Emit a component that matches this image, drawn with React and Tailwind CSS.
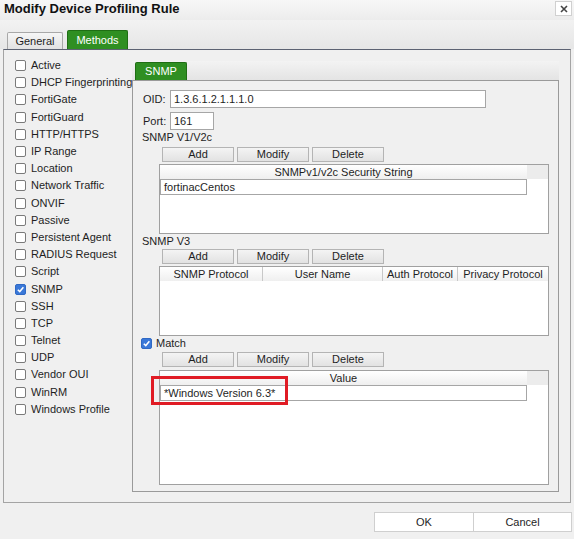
import React from "react";

const methods = [
  "Active",
  "DHCP Fingerprinting",
  "FortiGate",
  "FortiGuard",
  "HTTP/HTTPS",
  "IP Range",
  "Location",
  "Network Traffic",
  "ONVIF",
  "Passive",
  "Persistent Agent",
  "RADIUS Request",
  "Script",
  "SNMP",
  "SSH",
  "TCP",
  "Telnet",
  "UDP",
  "Vendor OUI",
  "WinRM",
  "Windows Profile",
];

function Check({ on }) {
  if (on) {
    return (
      <span className="w-[11px] h-[11px] rounded-[2px] bg-[#3a78d8] border border-[#3069c4] flex items-center justify-center shrink-0">
        <svg width="9" height="9" viewBox="0 0 10 10">
          <path d="M2 5.2 L4.2 7.3 L8.2 2.6" fill="none" stroke="#fff" strokeWidth="1.7" />
        </svg>
      </span>
    );
  }
  return <span className="w-[11px] h-[11px] rounded-[2px] bg-white border border-[#7a7a7a] shrink-0" />;
}

function Btn({ children }) {
  return (
    <div className="w-[72px] h-[15px] border border-[#b4b4b4] bg-gradient-to-b from-[#f4f4f4] to-[#e2e2e2] flex items-center justify-center leading-none">
      {children}
    </div>
  );
}

function BtnRow() {
  return (
    <div className="flex gap-[3px] pl-[29px]">
      <Btn>Add</Btn>
      <Btn>Modify</Btn>
      <Btn>Delete</Btn>
    </div>
  );
}

// tabla con cabecera de una columna y fila de entrada
function ListTable({ title, value, height }) {
  return (
    <div className={`ml-[26px] w-[390px] border border-[#a0a0a0] bg-white flex flex-col ${height}`}>
      <div className="flex h-[14px] shrink-0">
        <div className="w-[367px] bg-gradient-to-b from-white to-[#efefef] flex items-center justify-center leading-none">
          {title}
        </div>
        <div className="flex-1 bg-[#ececec]" />
      </div>
      {value !== undefined && (
        <div className="w-[367px] h-[16px] border border-[#a6a6a6] flex items-center px-[3px] leading-none bg-white">
          {value}
        </div>
      )}
    </div>
  );
}

export default function App() {
  return (
    <div className="w-[574px] h-[539px] bg-[#f0f0f0] flex flex-col font-['Liberation_Sans',Arial,sans-serif] text-[11px] text-[#1e1e1e] overflow-hidden">
      {/* Barra de titulo */}
      <div className="h-[20px] shrink-0 flex items-start justify-between bg-gradient-to-b from-[#f7f7f7] to-[#ececec]">
        <div className="pl-[4px] pt-[1px] text-[13px] font-bold text-[#111] leading-[16px]">Modify Device Profiling Rule</div>
        <div className="mt-[1px] mr-[2px] w-[17px] h-[15px] bg-white border border-[#d0d0d0] flex items-center justify-center">
          <svg width="8" height="8" viewBox="0 0 8 8">
            <path d="M1 1 L7 7 M7 1 L1 7" stroke="#444" strokeWidth="1.6" />
          </svg>
        </div>
      </div>

      {/* Pestañas */}
      <div className="h-[29px] shrink-0 flex items-end gap-[4px] pl-[7px] bg-gradient-to-b from-[#f2f2f2] to-[#e6e6e6]">
        <div className="w-[56px] h-[17px] border border-b-0 border-[#a8a8a8] rounded-t-[2px] bg-gradient-to-b from-[#f6f6f6] to-[#e2e2e2] flex items-center justify-center leading-none">
          General
        </div>
        <div className="w-[61px] h-[19px] border border-b-0 border-[#1f6e14] rounded-t-[2px] bg-[#2f8f22] text-white flex items-center justify-center leading-none">
          Methods
        </div>
      </div>

      {/* Panel principal */}
      <div className="mx-[3px] h-[454px] shrink-0 border border-[#a4a4a4] border-t-[#5c6272] flex">
        {/* Lista de metodos */}
        <div className="w-[128px] shrink-0 pl-[11px] pt-[7px] flex flex-col">
          {methods.map((m) => (
            <div key={m} className="h-[17.2px] flex items-center gap-[5px] whitespace-nowrap leading-none">
              <Check on={m === "SNMP"} />
              <span>{m}</span>
            </div>
          ))}
        </div>

        {/* Pestaña SNMP */}
        <div className="w-[427px] pt-[11px] pb-[10px] flex flex-col">
          <div className="h-[19px] shrink-0 flex items-end pl-[3px] bg-gradient-to-b from-[#f3f3f3] to-[#e4e4e4]">
            <div className="w-[52px] h-[18px] border border-b-0 border-[#1f6e14] rounded-t-[2px] bg-[#2f8f22] text-white flex items-center justify-center leading-none">
              SNMP
            </div>
          </div>
          <div className="flex-1 border border-[#9a9a9a] flex flex-col relative">
            <div className="mt-[9px] pl-[10px] flex items-center">
              <span className="w-[27px]">OID:</span>
              <div className="w-[316px] h-[18px] border border-[#a6a6a6] bg-white flex items-center px-[3px] leading-none">
                1.3.6.1.2.1.1.1.0
              </div>
            </div>
            <div className="mt-[4px] pl-[10px] flex items-center">
              <span className="w-[27px]">Port:</span>
              <div className="w-[44px] h-[18px] border border-[#a6a6a6] bg-white flex items-center px-[3px] leading-none">
                161
              </div>
            </div>
            <div className="h-[14px] pl-[9px] flex items-center leading-none">SNMP V1/V2c</div>
            <div className="mt-[3px]">
              <BtnRow />
            </div>
            <div className="mt-[2px]">
              <ListTable title="SNMPv1/v2c Security String" value="fortinacCentos" height="h-[70px]" />
            </div>

            <div className="h-[14px] pl-[9px] flex items-center leading-none">SNMP V3</div>
            <div className="mt-[1px]">
              <BtnRow />
            </div>
            <div className="mt-[2px] ml-[26px] w-[390px] h-[70px] border border-[#a0a0a0] bg-white flex flex-col">
              <div className="flex h-[14px] leading-none">
                <div className="w-[103px] border-r border-[#c8c8c8] bg-gradient-to-b from-white to-[#efefef] flex items-center justify-center">SNMP Protocol</div>
                <div className="w-[120px] border-r border-[#c8c8c8] bg-gradient-to-b from-white to-[#efefef] flex items-center justify-center">User Name</div>
                <div className="w-[75px] border-r border-[#c8c8c8] bg-gradient-to-b from-white to-[#efefef] flex items-center justify-center">Auth Protocol</div>
                <div className="flex-1 bg-gradient-to-b from-white to-[#efefef] flex items-center justify-center">Privacy Protocol</div>
              </div>
            </div>

            <div className="h-[14px] pl-[8px] flex items-center gap-[4px] leading-none">
              <Check on />
              <span>Match</span>
            </div>
            <div className="mt-[2px]">
              <BtnRow />
            </div>
            <div className="mt-[3px]">
              <ListTable title="Value" value={'*Windows Version 6.3*'} height="h-[115px]" />
            </div>

            {/* Recuadro rojo */}
            <div className="absolute left-[18px] top-[295px] w-[137px] h-[29px] border-[3px] border-[#e01b24]" />
          </div>
        </div>
      </div>

      {/* Botones OK / Cancel */}
      <div className="flex justify-end pr-[2px] pt-[9px]">
        <div className="w-[100px] h-[20px] border border-[#cfcfcf] bg-white flex items-center justify-center leading-none">OK</div>
        <div className="w-[98px] h-[20px] border border-l-0 border-[#cfcfcf] bg-white flex items-center justify-center leading-none">Cancel</div>
      </div>
    </div>
  );
}
